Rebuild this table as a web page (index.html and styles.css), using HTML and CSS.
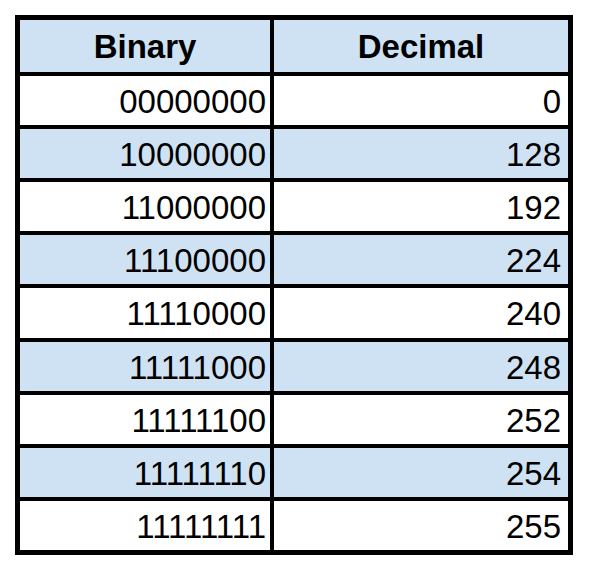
FILE: index.html
```html
<!DOCTYPE html>
<html>
<head>
<meta charset="utf-8">
<link rel="stylesheet" href="styles.css">
</head>
<body>
<div class="table">
  <div class="cell head">Binary</div><div class="cell head">Decimal</div>
  <div class="cell l">00000000</div><div class="cell r">0</div>
  <div class="cell l blue">10000000</div><div class="cell r blue">128</div>
  <div class="cell l">11000000</div><div class="cell r">192</div>
  <div class="cell l blue">11100000</div><div class="cell r blue">224</div>
  <div class="cell l">11110000</div><div class="cell r">240</div>
  <div class="cell l blue">11111000</div><div class="cell r blue">248</div>
  <div class="cell l">11111100</div><div class="cell r">252</div>
  <div class="cell l blue">11111110</div><div class="cell r blue">254</div>
  <div class="cell l">11111111</div><div class="cell r">255</div>
</div>
</body>
</html>
```
FILE: styles.css
```css
html, body {
  margin: 0;
  padding: 0;
  background: #fff;
}
body {
  padding: 15px;
  font-family: "Liberation Sans", Arial, sans-serif;
  font-size: 33px;
  color: #000;
}
.table {
  box-sizing: border-box;
  width: 558px;
  height: 540px;
  border: 5px solid #000;
  background: #000;
  display: grid;
  grid-template-columns: 250px 294px;
  grid-template-rows: 52px repeat(9, 1fr);
  gap: 4px;
}
.cell {
  background: #fff;
  display: flex;
  align-items: center;
  line-height: 1;
  padding-top: 2px;
  box-sizing: border-box;
}
.head {
  background: #cfe2f3;
  font-weight: bold;
  justify-content: center;
  padding-top: 0;
}
.blue {
  background: #cfe2f3;
}
.l {
  justify-content: flex-end;
  padding-right: 4px;
}
.r {
  justify-content: flex-end;
  padding-right: 7px;
}
```
